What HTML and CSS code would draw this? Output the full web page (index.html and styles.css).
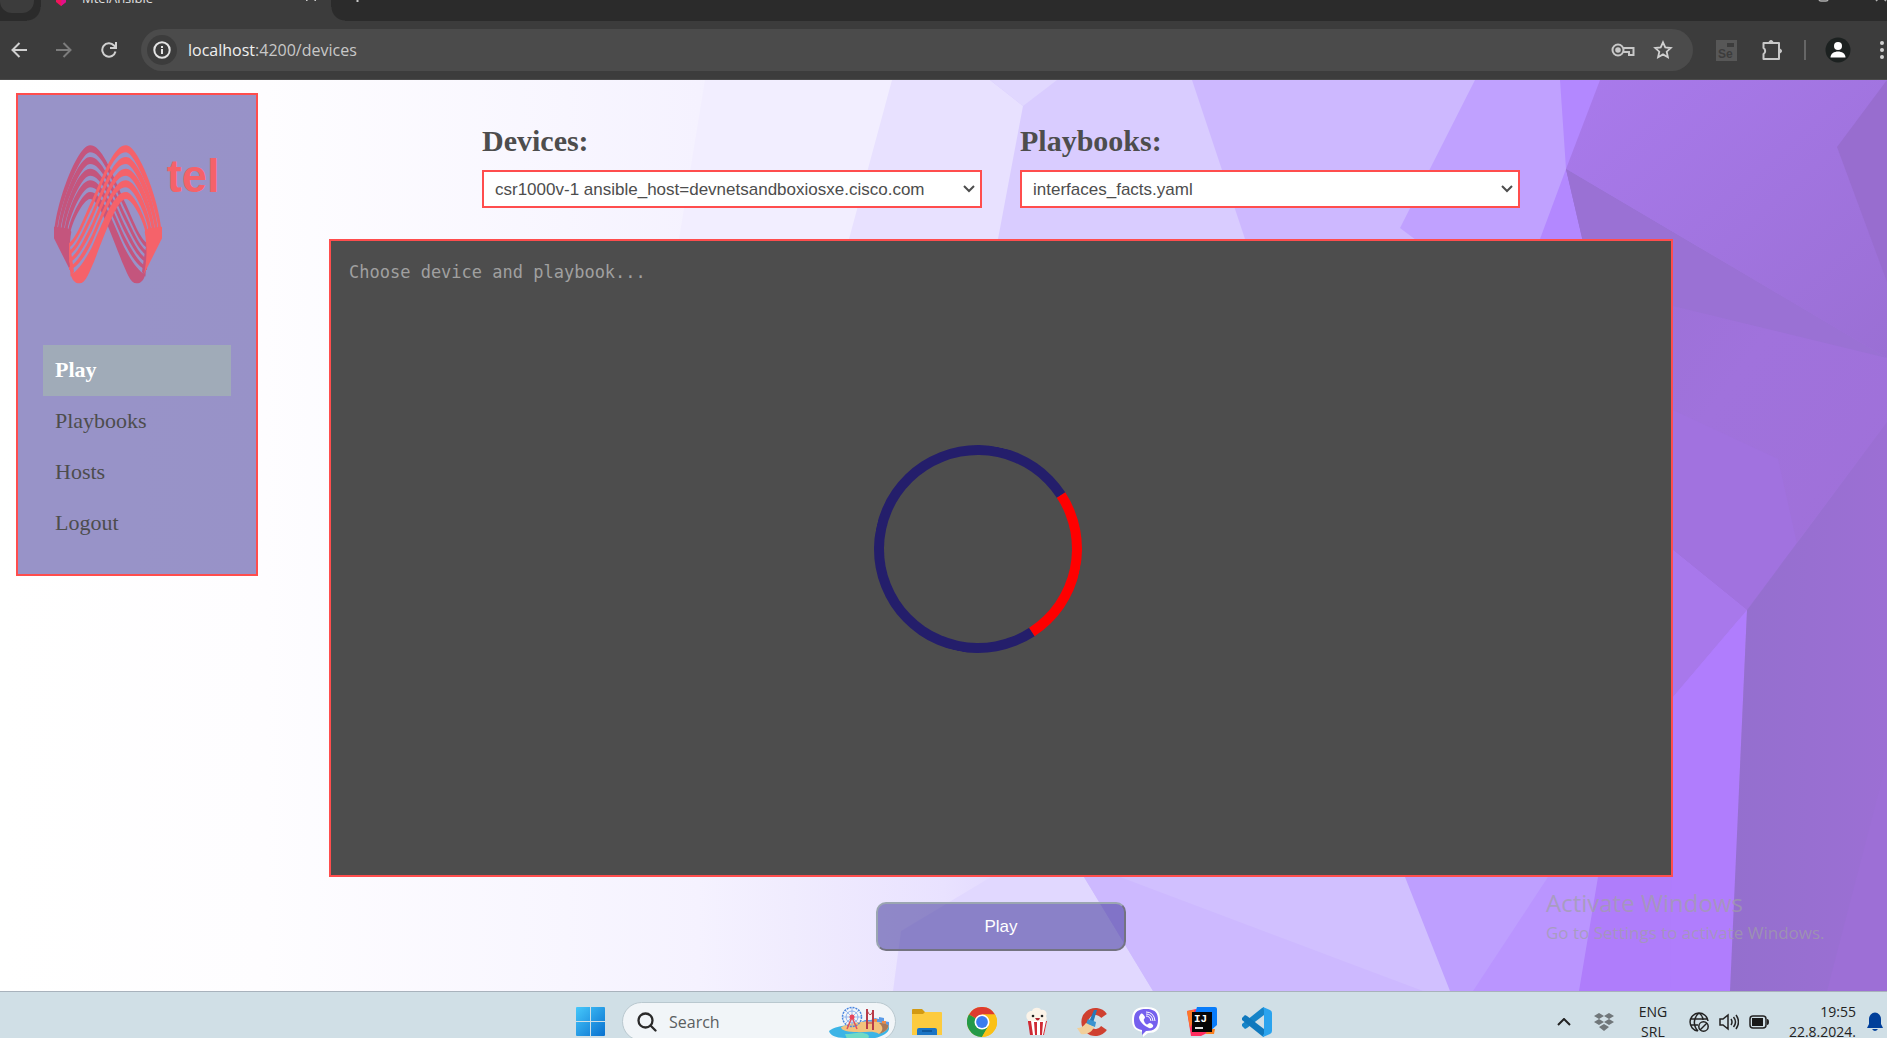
FILE: index.html
```html
<!DOCTYPE html>
<html lang="en">
<head>
<meta charset="utf-8">
<title>MtelAnsible</title>
<link rel="stylesheet" href="styles.css">
</head>
<body>
<header class="browser">
  <div class="tabs">
    <div class="tab-search"></div>
    <div class="tab">
      <svg class="favicon" width="10" height="12" viewBox="0 0 10 12"><path d="M0 0h10v8L5 12 0 8z" fill="#f0145a"/><path d="M6 0h4v8L5 12z" fill="#e0108c"/></svg>
      <span class="tab-title">MtelAnsible</span>
      <svg width="10" height="10" viewBox="0 0 10 10" stroke="#c8c8c8" stroke-width="1.5"><path d="M0 0l10 10M10 0L0 10"/></svg>
    </div>
    <svg class="tab-add" width="13" height="13" viewBox="0 0 13 13" stroke="#c8c8c8" stroke-width="2"><path d="M6.500 0v13M0 6.500h13"/></svg>
    <svg class="tab-window" width="70" height="12" viewBox="0 0 70 12" fill="none" stroke="#b0b0b0" stroke-width="1.500"><rect x="1" y="0" width="9" height="11" rx="2"/><path d="M58 11l10-10M68 11L58 1"/></svg>
  </div>
  <div class="toolbar">
    <button class="tool" aria-label="Back"><svg width="16" height="16" viewBox="0 0 16 16" fill="none" stroke="#d0d0d0" stroke-width="2"><path d="M16 8H2M8.500 1L1.500 8l7 7"/></svg></button>
    <button class="tool" aria-label="Forward"><svg width="16" height="16" viewBox="0 0 16 16" fill="none" stroke="#7c7c7c" stroke-width="2"><path d="M0 8h14M7.500 1l7 7-7 7"/></svg></button>
    <button class="tool" aria-label="Reload"><svg width="16" height="16" viewBox="0 0 16 16" fill="none" stroke="#d0d0d0" stroke-width="2"><path d="M14.500 9.500A6.700 6.700 0 1 1 13 3.500L15 6M15 0v6H9"/></svg></button>
    <div class="address">
      <button class="info" aria-label="Site information"><svg width="18" height="18" viewBox="0 0 18 18" fill="none" stroke="#e4e4e4" stroke-width="2"><circle cx="9" cy="9" r="7.700"/><path d="M9 8v5M9 5v2"/></svg></button>
      <a class="url" href="#"><b>localhost</b>:4200/devices</a>
      <button class="icon" aria-label="Passwords"><svg width="24" height="16" viewBox="0 0 24 16" fill="none" stroke="#c8c8c8" stroke-width="2"><circle cx="7" cy="8" r="5.500"/><circle cx="7" cy="8" r="1.800" fill="#c8c8c8"/><path d="M12 6h10.500v7H18v-3h-6"/></svg></button>
      <button class="icon" aria-label="Bookmark"><svg width="20" height="20" viewBox="0 0 20 20" fill="none" stroke="#d0d0d0" stroke-width="1.800"><path d="M10 2.300l2.300 5.100 5.500.600-4.100 3.700 1.200 5.500-4.900-2.800-4.900 2.800 1.200-5.500L2.200 8l5.500-.600z"/></svg></button>
    </div>
    <svg width="21" height="21" viewBox="0 0 21 21"><rect width="21" height="21" fill="#575757"/><rect x="11" y="3" width="7" height="4" fill="#3c3c3c"/><text x="2" y="18" class="se">Se</text></svg>
    <button class="icon puzzle" aria-label="Extensions"><svg width="22" height="22" viewBox="0 0 22 22" fill="none" stroke="#c8c8c8" stroke-width="2"><path d="M2.500 4H18v16H2.500v-5a3.500 3.500 0 0 0 0-6z" stroke-linejoin="round"/><path d="M8 3.500a2 2 0 0 1 4 0zM18.500 10a2 2 0 0 1 0 4z" fill="#c8c8c8" stroke-width="1"/></svg></button>
    <span class="divider"></span>
    <button class="icon" aria-label="Profile"><svg width="26" height="26" viewBox="0 0 26 26"><circle cx="13" cy="13" r="12.500" fill="#1c2120"/><circle cx="13" cy="9" r="4" fill="#fff"/><path d="M5.500 20.500c0-8 15-8 15 0z" fill="#fff"/></svg></button>
    <button class="icon menu" aria-label="Menu"><svg width="10" height="20" viewBox="0 0 10 20" fill="#d0d0d0"><circle cx="5" cy="3" r="2"/><circle cx="5" cy="10" r="2"/><circle cx="5" cy="17" r="2"/></svg></button>
  </div>
</header>

<div class="page">
  <svg class="backdrop" viewBox="0 80 1887 911" preserveAspectRatio="none" aria-hidden="true">
    <defs>
      <linearGradient id="wash"><stop offset="0" stop-color="#fff"/><stop offset=".14" stop-color="#fefdff"/><stop offset=".3" stop-color="#f8f6ff"/><stop offset=".37" stop-color="#f5f2ff"/><stop offset=".42" stop-color="#f0ecfe"/><stop offset=".5" stop-color="#e9e2ff"/><stop offset=".6" stop-color="#d6c8ff"/><stop offset=".7" stop-color="#c8b1ff"/><stop offset="1" stop-color="#a070dc"/></linearGradient>
      <linearGradient id="deep" x1="0" y1="0" x2="1" y2="1"><stop offset="0" stop-color="#a97aec"/><stop offset="1" stop-color="#9a6fd4"/></linearGradient>
      <linearGradient id="fold" x1="0" y1="0" x2="1" y2="1"><stop offset="0" stop-color="#9870d2"/><stop offset=".5" stop-color="#a072dc"/><stop offset="1" stop-color="#9f70d8"/></linearGradient>
      <linearGradient id="side"><stop offset="0" stop-color="#946fce"/><stop offset="1" stop-color="#9c6fd4"/></linearGradient>
    </defs>
    <rect y="80" width="1887" height="911" fill="url(#wash)"/>
    <path d="M705 80L679 239 700 560 1000 560V80z" fill="#f2eeff"/>
    <path d="M892 80L849 239V560h300V80z" fill="#e8e1ff"/>
    <path d="M990 80l33 26-25 133V560h300V80z" fill="#d9ccff"/>
    <path d="M990 80l33 26 34-26z" fill="#e1d8ff"/>
    <path d="M1192 80l53 159 100 321h250V80z" fill="#cdb8ff"/>
    <path d="M1475 80l-75 148 20 15 80 317h200V80z" fill="#c0a1ff"/>
    <path d="M1560 80l6 89-26 70-20 321h180V80z" fill="#b388ff"/>
    <path d="M893 991l8-60 90-54V560h409v431z" fill="#e1d8ff"/>
    <path d="M1084 877l69 114h320V560h-400z" fill="#d1c0ff"/>
    <path d="M1120 877l303 114h-270l-69-114z" fill="#cdb9ff"/>
    <path d="M1350 740l55 137 45 114h150V600z" fill="#be9fff"/>
    <path d="M1548 877l-75 114h220V600z" fill="#ba95ff"/>
    <path d="M1598 877l-19 114h160V500h-80z" fill="#af7dfb"/>
    <path d="M1600 80l-34 89 321 189V80z" fill="url(#deep)"/>
    <path d="M1887 80l-50 67 50 135z" fill="#986dcf"/>
    <path d="M1566 169l321 189v64l-140 188-74-60-90-308z" fill="url(#fold)"/>
    <path d="M1566 169L1887 358l-214-52-90-64z" fill="#9a71d4"/>
    <path d="M1673 410l105 49 19 85-50 66-74-60z" fill="#a172df"/>
    <path d="M1673 550l74 60-74 87z" fill="#a878eb"/>
    <path d="M1673 697l74-87-17 381h-60z" fill="#b07dfd"/>
    <path d="M1747 610l140-188v569h-157z" fill="url(#side)"/>
    <path d="M1887 760l-60 231h60z" fill="#9d6fd6"/>
  </svg>

  <aside class="sidebar">
    <svg class="logo" viewBox="129 120 564 675" role="img" aria-label="Mtel">
      <defs>
        <g id="ribbon" fill="currentColor">
          <path d="M163 465C163 385 230 196 270 196C305 196 330 266 372 361C392 400 415 470 441 490V504C415 486 392 421 372 382C330 287 305 217 270 217C240 217 171 395 171 465z"/>
          <path d="M173 465C173 395 230 231 270 231C305 231 330 301 372 396C392 435 415 496 441 514V526C415 512 392 456 372 417C330 322 305 252 270 252C240 252 181 405 181 465z"/>
          <path d="M183 465C183 405 230 266 270 266C305 266 330 336 372 431C392 470 415 522 441 538V548C415 538 392 491 372 452C330 357 305 287 270 287C240 287 191 415 191 465z"/>
          <path d="M193 465C193 415 235 301 270 301C305 301 330 371 372 466C392 505 415 548 441 562V570C415 564 392 526 372 487C330 392 305 322 270 322C245 322 201 425 201 465z"/>
          <path d="M203 465C203 430 245 336 270 336C305 336 330 406 372 501C392 540 415 574 436 584C430 602 422 610 410 610C390 610 380 575 366 545C325 440 295 357 270 357C250 357 211 435 211 465z"/>
          <path d="M441 490V530L436 590 426 575 434 520z"/>
          <path d="M162 440V475L216 582C207 540 206 500 214 455L203 445z"/>
        </g>
      </defs>
      <use href="#ribbon" class="ribbon-back"/>
      <use href="#ribbon" class="ribbon-front" transform="matrix(-1 0 0 1 648 0)"/>
      <text x="500" y="336" class="wordmark">tel</text>
    </svg>
    <nav class="nav">
      <a class="active" href="#play">Play</a>
      <a href="#playbooks">Playbooks</a>
      <a href="#hosts">Hosts</a>
      <a href="#logout">Logout</a>
    </nav>
  </aside>

  <main class="main">
    <div class="pickers">
      <div class="picker">
        <label for="device">Devices:</label>
        <select id="device"><option>csr1000v-1 ansible_host=devnetsandboxiosxe.cisco.com</option></select>
      </div>
      <div class="picker">
        <label for="playbook">Playbooks:</label>
        <select id="playbook"><option>interfaces_facts.yaml</option></select>
      </div>
    </div>
    <div class="console">
      <textarea class="output" aria-label="Output" placeholder="Choose device and playbook..." readonly></textarea>
      <div class="loading"><div class="spinner"></div></div>
    </div>
    <button class="play">Play</button>
  </main>

  <div class="watermark">
    <p class="watermark-title">Activate Windows</p>
    <p>Go to Settings to activate Windows.</p>
  </div>
</div>

<footer class="taskbar">
  <div class="apps">
    <svg width="30" height="30" viewBox="0 0 30 30"><defs><linearGradient id="win" x1="0" y1="0" x2="1" y2="1" gradientUnits="objectBoundingBox"><stop offset="0" stop-color="#46c8fb"/><stop offset="1" stop-color="#0870cf"/></linearGradient></defs><path d="M1 0h13v14H0V1q0-1 1-1zM15 0h13q1 0 1 1v13H15zM0 15h14v14H1q-1 0-1-1zM15 15h14v13q0 1-1 1H15z" fill="url(#win)"/></svg>
    <label class="search">
      <svg width="20" height="20" viewBox="0 0 20 20" fill="none" stroke="#2a2a2a" stroke-width="2.300"><circle cx="8.500" cy="8.500" r="7"/><path d="M13.500 13.500l5 5" stroke-linecap="round"/></svg>
      <input type="text" placeholder="Search" aria-label="Search">
      <svg class="scene" width="60" height="34" viewBox="0 0 60 34">
        <path d="M30 18l6-3h6l4-2 4 1v-2l5 1v3l5 1v7H30z" fill="#5a9be8"/><path d="M44 14h4v6h-4zM53 16h4v5h-4z" fill="#f08a4a"/>
        <path d="M0 26c4-4 14-5 22-7 14-3 34-2 38 3 1 5-6 9-14 11H16C6 33 1 30 0 26z" fill="#3cb4e6"/>
        <path d="M12 22c12-6 36-8 47-2 2 3-3 7-9 9-6-4-16-1-22-2-8 0-16-1-16-5z" fill="#f3c27c"/>
        <path d="M50 29c6-2 10-5 9-9-4-2-6-2-9-2 5 4 4 8 0 11z" fill="#a97858"/>
        <path d="M16 29c8 0 14-3 22 0 3 2 2 4 0 5H18z" fill="#6fdac6"/>
        <g fill="none"><circle cx="23" cy="12" r="9.500" stroke="#4a86e0" stroke-width="1.500" stroke-dasharray="2 1"/><circle cx="23" cy="12" r="6" stroke="#8ab0f0"/><path d="M23 3v18M14 12h18M17 6l12 12M29 6L17 18" stroke="#7ba6ea" stroke-width=".7"/><path d="M23 12l-5 12M23 12l5 12" stroke="#e0505c" stroke-width="1.500"/></g><circle cx="23" cy="12" r="2.500" fill="#e8445c"/>
        <path d="M37 4h2v20h-2zM43 5h2v20h-2z" fill="#b83a48"/><path d="M38 5q3 9 6 1M38 18h6" stroke="#b83a48" fill="none"/>
      </svg>
    </label>
    <div class="pinned">
      <svg width="30" height="30" viewBox="0 0 30 30"><path d="M0 3q0-1 1-1h9l3 3h16v6H0z" fill="#d39a12"/><path d="M0 7h11l2-2h16q1 0 1 1v22H0z" fill="#fdcb3e"/><path d="M5 28v-5q0-2 2-2h16q2 0 2 2v5z" fill="#1a74c4"/><path d="M10 24h10" stroke="#0a4f92" stroke-width="1.500"/></svg>
      <svg width="30" height="30" viewBox="0 0 30 30"><circle cx="15" cy="15" r="15" fill="#fbc116"/><path d="M15 15L2 7.500A15 15 0 0 1 28 7.500H15z" fill="#de3b2f"/><path d="M2 7.500A15 15 0 0 0 15 30l6.500-11.300L15 15z" fill="#249a48"/><path d="M15 7.500h13A15 15 0 0 1 15 30l6.500-11.300z" fill="#fbc116"/><circle cx="15" cy="15" r="7.500" fill="#fff"/><circle cx="15" cy="15" r="5.900" fill="#3b7ded"/></svg>
      <svg width="30" height="30" viewBox="0 0 30 30"><path d="M6 13C2 9 6 3 10 4c1-4 8-4 9-1 4-1 7 3 5 6 2 4-1 7-3 7H8q-2-1-2-3z" fill="#fbf3e8"/><path d="M6 14h19l-3 14H9z" fill="#fff"/><path d="M6 14h3l2 14H9zM12 15h3v13h-2zM18 15h3l-1 13h-2zM24 14h1l-3 14h-1z" fill="#cf2b35"/><path d="M6 14l2 14h2L8 14z" fill="#cf2b35"/><circle cx="11" cy="9" r="1.300" fill="#222"/><circle cx="20" cy="9" r="1.300" fill="#222"/><path d="M13 11h5q-2 5-5 0z" fill="#b2222e"/></svg>
      <svg width="30" height="30" viewBox="0 0 30 30"><path d="M27 9A10.500 10.500 0 1 0 27 21" fill="none" stroke="#cf4030" stroke-width="7"/><path d="M17 3h3l-4 13-4-1z" fill="#2578b8"/><path d="M11 12l8 3-1 5-9-3z" fill="#3a93cf"/><path d="M9 16l8 4c-2 5-7 8-13 7l-4-6c4 0 7-2 9-5z" fill="#f2cf9a"/></svg>
      <svg width="30" height="30" viewBox="0 0 30 30"><path d="M14 0c9 0 14 3 14 13s-4 13-12 13l-5 4v-5C4 24 0 21 0 13 0 3 5 0 14 0z" fill="#fff"/><path d="M14 2c8 0 12 3 12 11s-4 11-12 11l-4 4v-5c-6-1-8-4-8-10C2 5 6 2 14 2z" fill="#7560ee"/><path d="M8 8c2-3 3-1 5 2 0 2-2 2-1 4 1 3 3 4 4 3 2-2 3-1 5 1 1 2-2 4-4 3C12 19 7 14 7 10z" fill="#fff"/><path d="M14 9q4 0 5 5M14 7q6 0 7 7M14 5q8 0 9 9" stroke="#fff" fill="none" stroke-width="1"/></svg>
      <svg width="30" height="30" viewBox="0 0 30 30"><path d="M0 4l9-2 15 22-10 5H4z" fill="#ff2d60"/><path d="M0 4l7-1v10l-4 8z" fill="#fc7a28"/><path d="M10 0h18q2 0 2 2v16l-8 7L8 6z" fill="#087cfa"/><path d="M20 22h8l-1 5h-8z" fill="#f88020"/><rect x="5" y="5" width="20" height="20" fill="#050505"/><path d="M8 21h8" stroke="#fff" stroke-width="1.800"/><text x="7" y="15" class="ij">IJ</text></svg>
      <svg width="30" height="30" viewBox="0 0 30 30"><path d="M22 0v8L5 21l-2 1-3-3v-2L20 1z" fill="#1684c8"/><path d="M22 30v-8L5 9 3 8 0 11v2l20 16z" fill="#0f78bd"/><path d="M21 0l7 3q2 1 2 3v18q0 2-2 3l-7 3q-1-1 1-3V3z" fill="#2aa3ee"/></svg>
    </div>
  </div>
  <div class="tray">
    <svg width="14" height="8" viewBox="0 0 14 8" fill="none" stroke="#222" stroke-width="2"><path d="M1 7l6-6 6 6"/></svg>
    <svg class="dropbox" width="20" height="18" viewBox="0 0 20 18" fill="#70777a"><path d="M5 0l5 3-5 3-5-3zM15 0l5 3-5 3-5-3zM5 6l5 3-5 3-5-3zM15 6l5 3-5 3-5-3zM10 11l5 3-5 4-5-4z"/></svg>
    <span class="lang">ENG<br>SRL</span>
    <span class="status">
      <svg width="20" height="20" viewBox="0 0 20 20" fill="none" stroke="#222" stroke-width="1.500"><path d="M19 9A9 9 0 1 0 9 19M1 7h17M1 13h8M10 1C4 6 4 14 9 19M10 1q4 3 4 7"/><circle cx="14.500" cy="14.500" r="4.700"/><path d="M11 18l7-7"/></svg>
      <svg width="20" height="18" viewBox="0 0 20 18" fill="none" stroke="#222" stroke-width="1.500"><path d="M1 6h3l5-4v14l-5-4H1zM12 6q2 3 0 6M14.500 4q4 5 0 10M17 2q5 7 0 14"/></svg>
      <svg width="20" height="14" viewBox="0 0 20 14"><rect x="1" y="1" width="16" height="12" rx="3" fill="none" stroke="#222" stroke-width="1.500"/><rect x="3" y="3" width="11" height="8" fill="#181818"/><path d="M18 4q2 0 2 3t-2 3z" fill="#222"/></svg>
    </span>
    <time class="clock">19:55<br>22.8.2024.</time>
    <svg width="16" height="20" viewBox="0 0 16 20" fill="#003f9a"><path d="M2 7a6 6.500 0 0 1 12 0v5l2 4H0l2-4zM5 17h6q-3 4-6 0z"/></svg>
  </div>
</footer>
</body>
</html>
```

FILE: styles.css
```css
* {
  box-sizing: border-box;
}

body {
  margin: 0;
  height: 100vh;
  display: flex;
  flex-direction: column;
  overflow: hidden;
  font-family: "Liberation Serif", "Times New Roman", serif;
  color: #4d4d4d;
}

svg {
  display: block;
  flex: none;
}

a {
  color: inherit;
  text-decoration: none;
}

button {
  font: inherit;
  color: inherit;
}

/* Browser window frame */
.browser,
.taskbar,
.watermark {
  font-family: "Open Sans", "Noto Sans", sans-serif;
}

.browser {
  flex: none;
  color: #c8c8c8;
}

.tabs {
  display: flex;
  align-items: flex-end;
  height: 21px;
  overflow: hidden;
  background: #2b2b2b;
}

.tab-search {
  width: 34px;
  height: 40px;
  margin-bottom: 8px;
  border-radius: 0 0 12px 12px;
  background: #3c3c3c;
}

.tab {
  position: relative;
  display: flex;
  align-items: flex-end;
  width: 290px;
  height: 42px;
  margin-left: 7px;
  padding: 0 15px 15px;
  background: #3c3c3c;
}

/* Curved feet where the active tab meets the toolbar */
.tab::before,
.tab::after {
  content: "";
  position: absolute;
  bottom: 0;
  width: 14px;
  height: 14px;
}

.tab::before {
  right: 100%;
  background: radial-gradient(circle at 0 0, transparent 13px, #3c3c3c 14px);
}

.tab::after {
  left: 100%;
  background: radial-gradient(circle at 100% 0, transparent 13px, #3c3c3c 14px);
}

.tab-title {
  flex: 1;
  margin-left: 16px;
  font-size: 13px;
  line-height: 16px;
  color: #e0e0e0;
}

.tab-title + svg {
  margin-bottom: 5px;
}

.tab-add {
  margin: 0 0 19px 20px;
}

.tab-window {
  margin: 0 -1px 19px auto;
}

.toolbar {
  display: flex;
  align-items: center;
  height: 59px;
  padding-left: 4px;
  border-bottom: 1px solid #4b4b4b;
  background: #3c3c3c;
}

.tool,
.icon,
.info {
  display: flex;
  flex: none;
  align-items: center;
  justify-content: center;
  padding: 0;
  border: 0;
  background: none;
}

.tool {
  width: 30px;
  height: 30px;
  margin-right: 15px;
}

.address {
  display: flex;
  flex: 1;
  align-items: center;
  height: 42px;
  margin: 0 23px 0 2px;
  padding: 0 20px 0 6px;
  border-radius: 21px;
  background: #4b4b4b;
}

.info {
  width: 30px;
  height: 30px;
  border-radius: 50%;
  background: #3c3c3c;
}

.url {
  flex: 1;
  margin-left: 11px;
  font-size: 16px;
}

.url b {
  font-weight: 400;
  color: #f0f0f0;
}

.address .icon + .icon {
  margin-left: 18px;
}

.se {
  font: bold 12px "Liberation Sans", Arial, sans-serif;
  fill: #3c3c3c;
}

.puzzle {
  margin-left: 24px;
}

.divider {
  width: 2px;
  height: 20px;
  margin: 0 19px 0 21px;
  background: #666;
}

.menu {
  width: 10px;
  margin-left: 26px;
}

/* Application page */
.page {
  position: relative;
  display: flex;
  flex: 1;
  align-items: flex-start;
  gap: 71px;
  min-height: 0;
  padding: 13px 214px 0 16px;
}

.backdrop {
  position: absolute;
  inset: 0;
  z-index: -1;
  width: 100%;
  height: 100%;
}

.sidebar {
  flex: none;
  width: 242px;
  padding: 25px;
  border: 2px solid #ff4d4d;
  background: rgb(68 59 155 / 55%);
}

.logo {
  width: 188px;
  height: 225px;
}

.ribbon-back {
  color: #c4557d;
}

.ribbon-front {
  color: #f5626a;
}

.wordmark {
  font: bold 136px "Liberation Sans", Arial, sans-serif;
  fill: #f5626a;
}

.nav a {
  display: block;
  padding: 12px 12px 13px;
  font-size: 22px;
  line-height: 26px;
}

.nav .active {
  font-weight: 700;
  color: #fff;
  background: #a0abb8;
}

.main {
  display: flex;
  flex: 1;
  flex-direction: column;
  align-items: center;
  min-width: 0;
  padding-top: 30px;
}

.pickers {
  display: flex;
  gap: 38px;
  margin-bottom: 31px;
}

.picker {
  display: flex;
  flex-direction: column;
  gap: 11px;
  width: 500px;
}

.picker label {
  font-size: 30px;
  font-weight: 700;
  line-height: 36px;
}

.picker select {
  appearance: none;
  height: 38px;
  padding: 0 24px 0 11px;
  border: 2px solid #ff4d4d;
  border-radius: 0;
  background: #fff url("data:image/svg+xml,%3Csvg xmlns='http://www.w3.org/2000/svg' width='12' height='8' fill='none' stroke='%234d4d4d' stroke-width='2'%3E%3Cpath d='M1 1l5 5 5-5'/%3E%3C/svg%3E") no-repeat right 5px center;
  font: 17px "Liberation Sans", Arial, sans-serif;
  color: #4d4d4d;
}

.console {
  position: relative;
  width: 100%;
  margin-bottom: 25px;
}

.output {
  display: block;
  width: 100%;
  height: 638px;
  padding: 20px 18px;
  border: 2px solid #ff4d4d;
  background: #4d4d4d;
  font: 17px/22px "DejaVu Sans Mono", monospace;
  color: #fff;
  resize: none;
}

.output::placeholder {
  color: #a0a0a0;
}

.loading {
  position: absolute;
  inset: 0;
  display: grid;
  place-items: center;
  padding: 0 46px 18px 0;
  pointer-events: none;
}

.spinner {
  width: 208px;
  height: 208px;
  border: 10px solid #241e6b;
  border-right-color: #f00;
  border-radius: 50%;
  transform: rotate(12deg);
}

.play {
  width: 250px;
  height: 49px;
  border: 2px solid;
  border-color: #9ba6b1 #737380 #737380 #9ba6b1;
  border-radius: 10px;
  background: rgb(68 59 155 / 55%);
  font: 17px "Liberation Sans", Arial, sans-serif;
  color: #fff;
}

.watermark {
  position: absolute;
  right: 48px;
  bottom: 46px;
  width: 293px;
  white-space: nowrap;
  font-size: 17px;
  line-height: 24px;
  color: rgb(160 160 165 / 70%);
}

.watermark p {
  margin: 0;
}

.watermark .watermark-title {
  font-size: 24px;
  line-height: 36px;
}

/* Desktop taskbar */
.taskbar {
  display: grid;
  grid-template-columns: 1fr auto 1fr;
  flex: none;
  height: 47px;
  overflow: hidden;
  border-top: 1px solid #a8b2bc;
  background: #d0dfe6;
  color: #222;
}

.apps,
.tray {
  display: flex;
  align-items: center;
  height: 59px;
}

.apps {
  grid-column: 2;
  padding-right: 39px;
}

.search {
  display: flex;
  align-items: center;
  width: 274px;
  height: 39px;
  margin: 0 16px;
  padding: 0 6px 0 14px;
  border: 1px solid #b9c8cf;
  border-radius: 20px;
  background: #f1f5f8;
}

.search input {
  flex: 1;
  min-width: 0;
  margin-left: 10px;
  border: 0;
  background: none;
  font: 16px "Open Sans", "Noto Sans", sans-serif;
}

.search input::placeholder {
  color: #5a5e60;
}

.pinned {
  display: flex;
  gap: 25px;
}

.ij {
  font: bold 11px "Liberation Mono", "Courier New", monospace;
  fill: #fff;
}

.tray {
  justify-content: flex-end;
  padding-right: 4px;
  font-size: 14px;
  line-height: 20px;
}

.dropbox {
  margin: 0 24px 0 23px;
}

.lang {
  width: 30px;
  text-align: center;
}

.status {
  display: flex;
  align-items: center;
  gap: 10px;
  margin: 0 20px 0 21px;
}

.clock {
  margin-right: 11px;
  text-align: right;
}
```
